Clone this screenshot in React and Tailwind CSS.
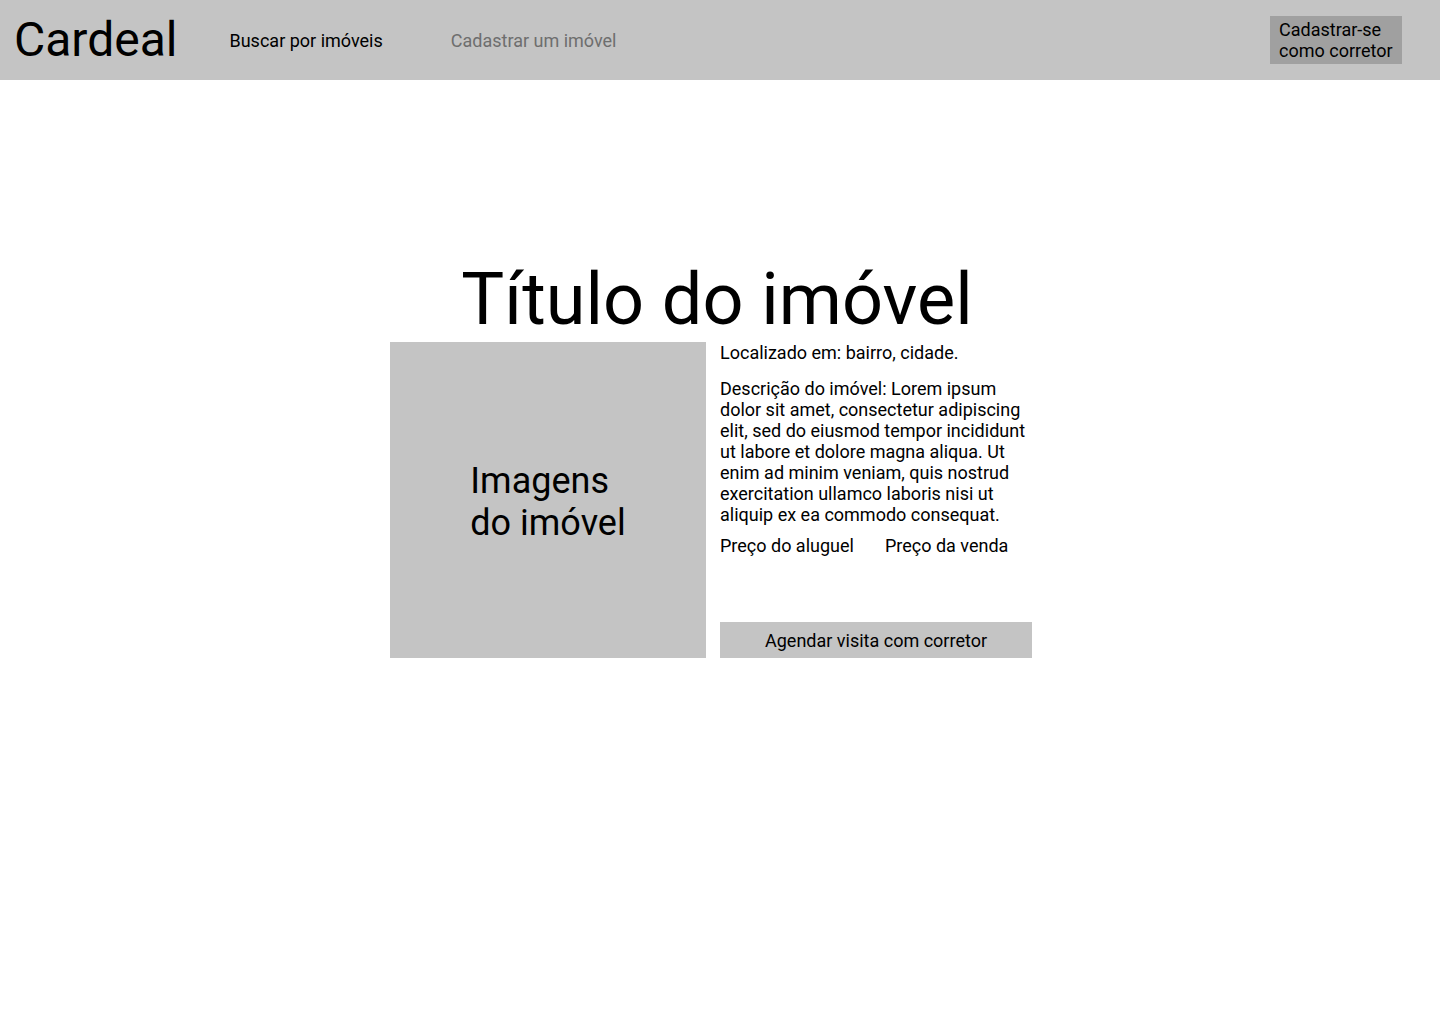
export default function App() {
  return (
    <div className="min-h-[1024px] bg-white text-black font-['Roboto',sans-serif]">
      {/* HEADER */}
      <header className="h-[80px] bg-[#c4c4c4] flex items-center pl-[14px] pr-[38px]">
        <h1 className="text-[48px] leading-[56px] font-normal">Cardeal</h1>
        <nav className="flex items-center ml-[52px] text-[18px] leading-[21px]">
          <a className="text-black">Buscar por imóveis</a>
          <a className="ml-[68px] text-[#6e6e6e]">Cadastrar um imóvel</a>
        </nav>
        <button className="ml-auto w-[132px] h-[48px] bg-[#a0a0a0] pl-[9px] text-left text-[18px] leading-[21px] text-black">
          Cadastrar-se
          <br />
          como corretor
        </button>
      </header>

      {/* CONTEUDO */}
      <main className="flex flex-col items-center pt-[178px]">
        <h2 className="text-[72px] leading-[84px] font-normal -translate-x-[3px]">Título do imóvel</h2>
        <div className="flex gap-[14px] mr-[18px]">
          <div className="w-[316px] h-[316px] bg-[#c4c4c4] flex items-center justify-center">
            <p className="text-[36px] leading-[42px] text-left pt-[4px]">
              Imagens
              <br />
              do imóvel
            </p>
          </div>
          <div className="w-[312px] h-[316px] flex flex-col text-[18px] leading-[21px]">
            <p>Localizado em: bairro, cidade.</p>
            <p className="mt-[15px]">
              Descrição do imóvel: Lorem ipsum dolor sit amet, consectetur adipiscing elit, sed do eiusmod tempor
              incididunt ut labore et dolore magna aliqua. Ut enim ad minim veniam, quis nostrud exercitation ullamco
              laboris nisi ut aliquip ex ea commodo consequat.
            </p>
            <div className="flex gap-[31px] mt-[10px]">
              <span>Preço do aluguel</span>
              <span>Preço da venda</span>
            </div>
            <button className="mt-auto h-[36px] w-full bg-[#c4c4c4] text-center text-[18px] leading-[21px]">
              Agendar visita com corretor
            </button>
          </div>
        </div>
      </main>
    </div>
  );
}
